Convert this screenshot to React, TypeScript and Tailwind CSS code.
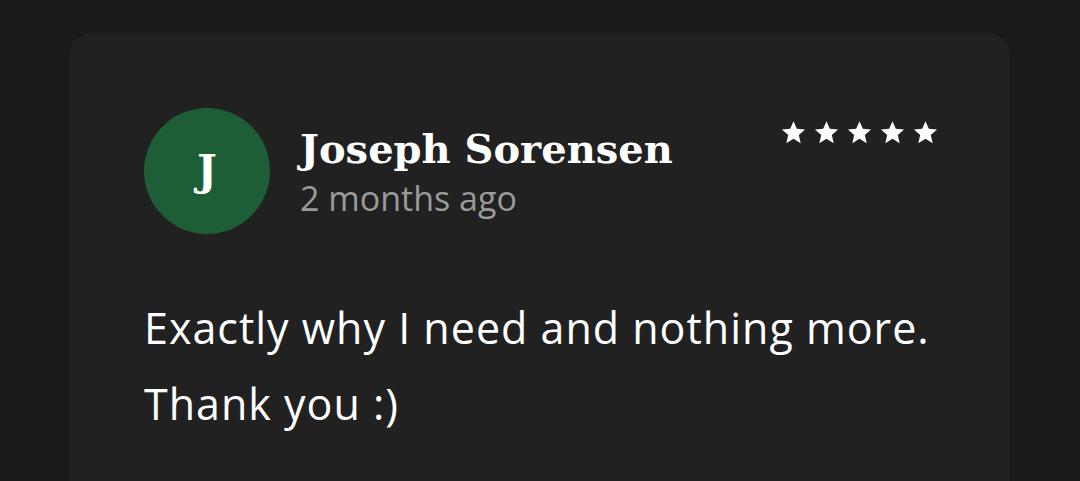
const Star = () => (
  <svg viewBox="0 0 24 24" className="w-[25px] h-[25px] fill-white">
    <path d="M12 1.2l3.2 7.3 7.9.7-6 5.2 1.8 7.8L12 18.1l-6.9 4.1 1.8-7.8-6-5.2 7.9-.7z" />
  </svg>
);

export default function App() {
  return (
    <div className="w-[1080px] h-[481px] bg-[#1a1a1a] overflow-hidden pt-[33px] px-[69px]">
      <div className="w-[941px] h-[520px] bg-[#212121] rounded-[22px] pl-[75px] pr-[72px] pt-[75px]">
        <div className="flex items-start justify-between">
          <div className="flex items-center gap-[30px]">
            <div className="w-[126px] h-[126px] rounded-full bg-[#1d5e36] flex items-center justify-center">
              <span className="text-white text-[42px] font-bold font-['DejaVu_Serif',serif] leading-none">
                J
              </span>
            </div>
            <div className="flex flex-col">
              <span className="text-white text-[40px] font-bold font-['DejaVu_Serif',serif] leading-[54px]">
                Joseph Sorensen
              </span>
              <span className="text-[#9a9a9a] text-[34px] font-['Open_Sans',sans-serif] leading-[44px]">
                2 months ago
              </span>
            </div>
          </div>
          <div className="flex gap-[8px] pt-[12px]">
            <Star />
            <Star />
            <Star />
            <Star />
            <Star />
          </div>
        </div>
        <div className="mt-[56px] text-white text-[43px] tracking-[1px] font-['Open_Sans',sans-serif] leading-[76px]">
          <p>Exactly why I need and nothing more.</p>
          <p>Thank you :)</p>
        </div>
      </div>
    </div>
  );
}
